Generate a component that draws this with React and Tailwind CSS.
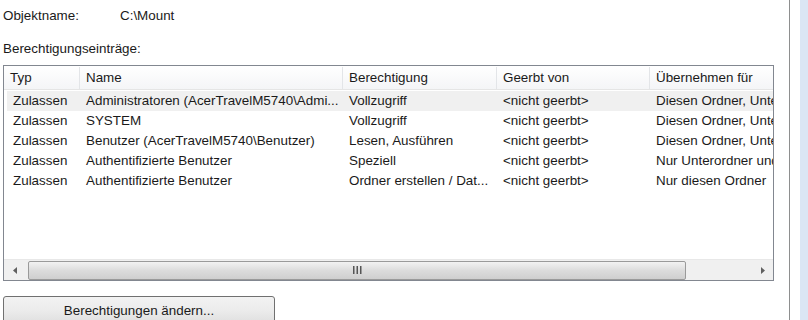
import React from "react";

const cols = [
  { w: 76, label: "Typ" },
  { w: 263, label: "Name" },
  { w: 154, label: "Berechtigung" },
  { w: 153, label: "Geerbt von" },
  { w: 200, label: "Übernehmen für" },
];

const rows = [
  ["Zulassen", "Administratoren (AcerTravelM5740\\Admi...", "Vollzugriff", "<nicht geerbt>", "Diesen Ordner, Unte"],
  ["Zulassen", "SYSTEM", "Vollzugriff", "<nicht geerbt>", "Diesen Ordner, Unte"],
  ["Zulassen", "Benutzer (AcerTravelM5740\\Benutzer)", "Lesen, Ausführen", "<nicht geerbt>", "Diesen Ordner, Unte"],
  ["Zulassen", "Authentifizierte Benutzer", "Speziell", "<nicht geerbt>", "Nur Unterordner und"],
  ["Zulassen", "Authentifizierte Benutzer", "Ordner erstellen / Dat...", "<nicht geerbt>", "Nur diesen Ordner"],
];

export default function App() {
  return (
    <div
      className="w-[808px] h-[320px] bg-white flex overflow-hidden text-[13.4px] text-[#1a1a1a]"
      style={{ fontFamily: '"Liberation Sans", Arial, sans-serif' }}
    >
      <div className="w-[789px] shrink-0 pl-[3px] flex flex-col">
        <div className="h-[18px] mt-[7px] shrink-0 flex items-center">
          <span className="w-[117px]">Objektname:</span>
          <span>C:\Mount</span>
        </div>
        <div className="h-[18px] mt-[15px] shrink-0 flex items-center">Berechtigungseinträge:</div>
        <div className="mt-[7px] shrink-0 w-[771px] h-[216px] border border-[#828790] flex flex-col overflow-hidden">
          <div className="h-[24px] flex shrink-0 bg-gradient-to-b from-white to-[#f4f5f7] border-b border-[#e5e5e5] pt-[1px]">
            {cols.map((c, i) => (
              <div
                key={i}
                style={{ width: c.w }}
                className="shrink-0 h-full flex items-center pl-[6px] border-r border-[#e3e5e8] whitespace-nowrap overflow-hidden"
              >
                {c.label}
              </div>
            ))}
          </div>
          <div className="flex-1 flex flex-col pt-[1px]">
            {rows.map((r, ri) => (
              <div
                key={ri}
                className={`h-[20px] ml-[3px] flex shrink-0 ${ri === 0 ? "bg-[#f0f0f0]" : ""}`}
              >
                {r.map((cell, ci) => (
                  <div
                    key={ci}
                    style={{ width: ci === 0 ? cols[ci].w - 3 : cols[ci].w }}
                    className="shrink-0 h-full flex items-center pl-[6px] whitespace-nowrap overflow-hidden"
                  >
                    {cell}
                  </div>
                ))}
              </div>
            ))}
          </div>
          <div className="h-[21px] shrink-0 flex items-center bg-[#f0f0f0] border-t border-[#e8e8e8]">
            <div className="w-[22px] h-full flex items-center justify-center">
              <svg width="5" height="7" viewBox="0 0 5 7">
                <path d="M4 0 L0 3.5 L4 7 Z" fill="#606060" />
              </svg>
            </div>
            <div className="ml-[2px] w-[658px] h-[19px] rounded-[2px] border border-[#9a9a9a] bg-gradient-to-b from-[#f2f2f2] via-[#dcdcdc] to-[#cfcfcf] flex items-center justify-center">
              <svg width="9" height="8" viewBox="0 0 9 8">
                <rect x="0" y="0" width="1.5" height="8" fill="#555" />
                <rect x="3.5" y="0" width="1.5" height="8" fill="#555" />
                <rect x="7" y="0" width="1.5" height="8" fill="#555" />
              </svg>
            </div>
            <div className="flex-1" />
            <div className="w-[22px] h-full flex items-center justify-center">
              <svg width="5" height="7" viewBox="0 0 5 7">
                <path d="M1 0 L5 3.5 L1 7 Z" fill="#606060" />
              </svg>
            </div>
          </div>
        </div>
        <div className="mt-[15px] shrink-0 w-[272px] h-[30px] rounded-[3px] border border-[#707070] bg-gradient-to-b from-[#f2f2f2] via-[#ebebeb] to-[#dddddd] flex items-start justify-center pt-[4px]">
          Berechtigungen ändern...
        </div>
      </div>
      <div className="w-px shrink-0 bg-[#8e8f8f]" />
      <div className="w-[10px] shrink-0 bg-white" />
      <div className="flex-1 bg-[#dbe6f4]" />
    </div>
  );
}
